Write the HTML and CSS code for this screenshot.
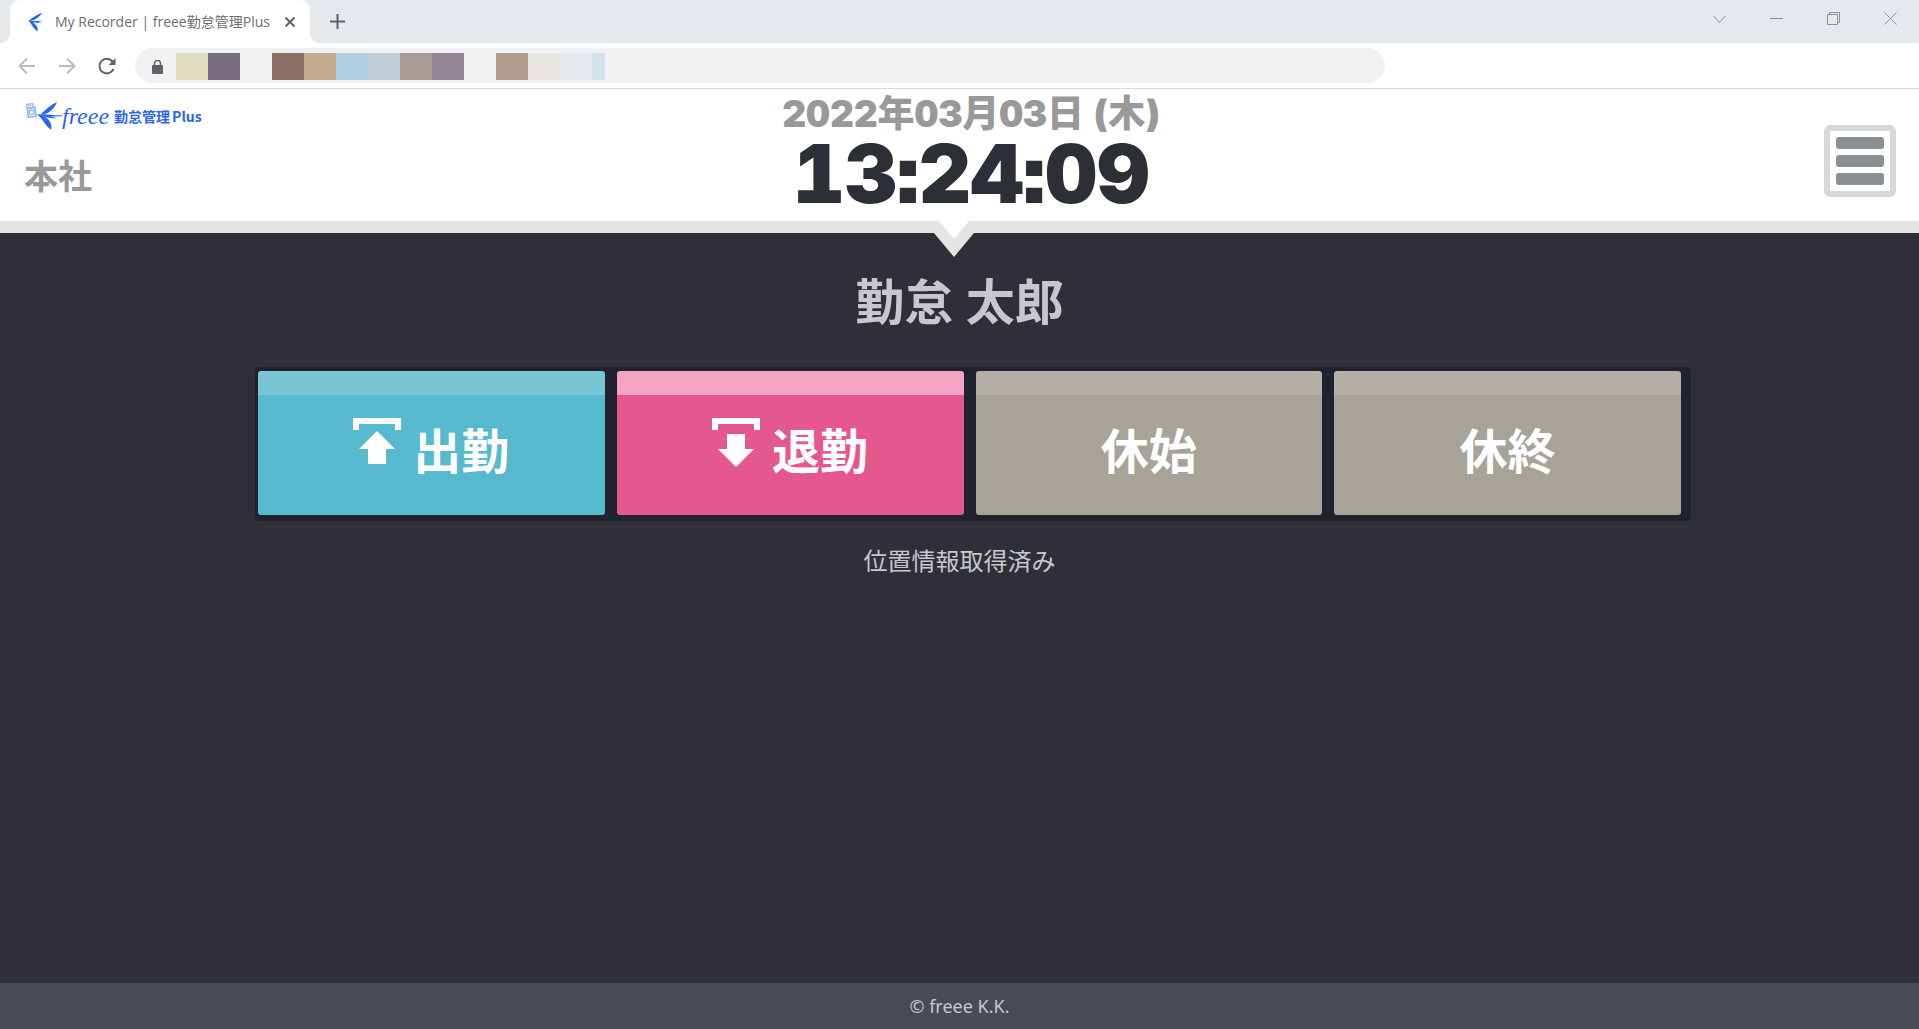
FILE: index.html
```html
<!DOCTYPE html>
<html lang="ja">
<head>
    <meta charset="UTF-8">
    <title>My Recorder | freee勤怠管理Plus</title>
    <link rel="stylesheet" href="styles.css">
</head>
<body>
    <!--ブラウザ枠-->
    <div class="browser">
        <div class="tab-bar">
            <div class="tab">
                <svg class="tab-icon" width="16" height="20" viewBox="84 34 48 60" fill="#2864f0">
                    <path d="M126 36C112 41 97 50 85 61C94 61 101 60 105 56C115 50 122 44 126 36Z"/>
                    <path d="M85 61C96 69 98 83 113 92C114 82 111 74 104 69L99 65L128 68L114 64L129 60L98 61Z"/>
                </svg>
                <span class="tab-title">My Recorder | freee勤怠管理Plus</span>
                <button class="tab-close" type="button" aria-label="タブを閉じる">
                    <svg width="10" height="10" viewBox="0 0 10 10" fill="none" stroke="#5f6368" stroke-width="2"><path d="M0.5 0.5L9.5 9.5M9.5 0.5L0.5 9.5"/></svg>
                </button>
            </div>
            <button class="tab-add" type="button" aria-label="新しいタブ">
                <svg width="15" height="15" viewBox="0 0 15 15" fill="none" stroke="#5f6368" stroke-width="2"><path d="M7.5 0V15M0 7.5H15"/></svg>
            </button>
            <div class="window-buttons">
                <button type="button" aria-label="タブを検索"><svg width="14" height="14" viewBox="0 0 14 14"><path d="M0.5 4L6.5 10.5L12.5 4"/></svg></button>
                <button type="button" aria-label="最小化"><svg width="14" height="14" viewBox="0 0 14 14"><path d="M0 6.5H13"/></svg></button>
                <button type="button" aria-label="元に戻す"><svg width="14" height="14" viewBox="0 0 14 14"><path d="M0.5 2.5H10.5V12.5H0.5ZM2.5 2V0.5H12.5V10.5H11"/></svg></button>
                <button type="button" aria-label="閉じる"><svg width="14" height="14" viewBox="0 0 14 14"><path d="M0.5 0.5L12.5 12.5M12.5 0.5L0.5 12.5"/></svg></button>
            </div>
        </div>
        <div class="tool-bar">
            <button class="nav off" type="button" aria-label="戻る"><svg width="18" height="18" viewBox="0 0 18 18"><path d="M17 9H2M9 1.5L1.5 9L9 16.5"/></svg></button>
            <button class="nav off" type="button" aria-label="進む"><svg width="18" height="18" viewBox="0 0 18 18"><path d="M1 9H16M9 1.5L16.5 9L9 16.5"/></svg></button>
            <button class="nav" type="button" aria-label="再読み込み"><svg width="18" height="18" viewBox="0 0 18 18"><path d="M15.5 12A7.3 7.3 0 1 1 14.5 4.5"/><path class="solid" d="M17.5 1V8H10.5Z"/></svg></button>
            <div class="address">
                <svg class="lock" width="11" height="14" viewBox="0 0 11 14"><rect y="5" width="11" height="9" rx="1" fill="#5f6368"/><path d="M2.5 6V3.5A3 3 0 0 1 8.5 3.5V6" fill="none" stroke="#5f6368" stroke-width="1.5"/></svg>
                <div class="mosaic">
                    <i class="c1"></i><i class="c2"></i><i></i><i class="c3"></i><i class="c4"></i><i class="c5"></i><i class="c6"></i><i class="c7"></i><i class="c8"></i><i></i><i class="c9"></i><i class="c10"></i><i class="c11"></i><i class="c12"></i>
                </div>
                <input type="text" aria-label="アドレス">
            </div>
        </div>
    </div>
    <!--ヘッダー-->
    <header class="header">
        <div class="company">
            <a class="logo" href="#">
                <svg width="38" height="31" viewBox="72 48 114 93">
                    <g fill="none" stroke="#8db5fb" stroke-width="5">
                        <path d="M82 73L105 70L108 97L85 100Z"/>
                        <path d="M82 73L80 61L98 59L100 71M88 60V66L93 65" stroke-width="4"/>
                        <circle cx="95" cy="85" r="7" stroke-width="4"/>
                    </g>
                    <g fill="#2864f0">
                        <path d="M171 54C154 62 136 76 123 91C133 91 142 89 148 84C159 76 167 66 171 54Z"/>
                        <path d="M112 92C130 104 132 123 154 137C156 122 150 108 136 100L130 97L112 92Z"/>
                        <path d="M110 92C130 88 145 93 186 94L186 97C172 96 162 97 152 98L174 103C154 103 130 99 110 92Z"/>
                    </g>
                </svg>
                <span class="logo-script">freee</span>
                <span class="logo-name">勤怠管理</span>
                <span class="logo-name">Plus</span>
            </a>
            <p class="office">本社</p>
        </div>
        <div class="now">
            <p class="date">2022年03月03日 (木)</p>
            <p class="clock">13:24:09</p>
        </div>
        <button class="menu" type="button" aria-label="メニュー"><span></span><span></span><span></span></button>
        <svg class="pointer" width="40" height="36" viewBox="0 0 40 36"><path d="M0 12H40L20 36Z" fill="#e4e4e4"/><path d="M5 0H35L20 18Z" fill="#fff"/></svg>
    </header>
    <!--打刻-->
    <main class="main">
        <h1 class="name">勤怠 太郎</h1>
        <div class="punch">
            <button class="in" type="button">
                <svg width="48" height="50" viewBox="0 0 48 50" fill="#fff"><path d="M0 0H48V12H42V6H6V12H0Z"/><path d="M24 13L42 31H33V46H15V31H6Z"/></svg>出勤
            </button>
            <button class="out" type="button">
                <svg width="48" height="50" viewBox="0 0 48 50" fill="#fff"><path d="M0 0H48V12H42V6H6V12H0Z"/><path d="M15 16H33V31H42L24 49L6 31H15Z"/></svg>退勤
            </button>
            <button type="button">休始</button>
            <button type="button">休終</button>
        </div>
        <p class="status">位置情報取得済み</p>
    </main>
    <footer class="footer">© freee K.K.</footer>
</body>
</html>
```

FILE: styles.css
```css
*{
    box-sizing: border-box;
}
body{
    display: flex;
    flex-direction: column;
    min-height: 100vh;
    margin: 0;
    background-color: #2f2f38;
    font-family: "Noto Sans", "Noto Sans CJK JP", sans-serif;
}
p,h1{
    margin: 0;
}
button{
    display: flex;
    align-items: center;
    justify-content: center;
    padding: 0;
    border: 0;
    background: none;
    font-family: inherit;
    cursor: pointer;
}
/**ブラウザ枠**/
.browser{
    border-bottom: 1px solid #d9dadc;
    background-color: #fff;
}
.tab-bar{
    display: flex;
    height: 43px;
    padding-left: 10px;
    background-color: #e5e9ec;
}
.tab{
    position: relative;
    display: flex;
    align-items: center;
    width: 300px;
    padding: 0 15px 0 18px;
    border-radius: 10px 10px 0 0;
    background-color: #fff;
}
/**タブ下の丸み**/
.tab:before,.tab:after{
    content: '';
    position: absolute;
    bottom: 0;
    width: 10px;
    height: 10px;
}
.tab:before{
    left: -10px;
    background: radial-gradient(circle at 0 0, transparent 10px, #fff 10px);
}
.tab:after{
    right: -10px;
    background: radial-gradient(circle at 100% 0, transparent 10px, #fff 10px);
}
.tab-title{
    flex: 1;
    margin-left: 11px;
    font-family: "Open Sans", "Noto Sans CJK JP", sans-serif;
    font-size: 14px;
    line-height: 20px;
    color: #6a6d71;
    white-space: nowrap;
}
.tab-add{
    width: 54px;
}
.window-buttons{
    display: flex;
    height: 38px;
    margin-left: auto;
}
.window-buttons button{
    width: 57px;
}
.window-buttons svg{
    fill: none;
    stroke: #8c8f92;
}
.tool-bar{
    display: flex;
    align-items: center;
    height: 45px;
    padding: 0 534px 0 7px;
}
.nav{
    width: 40px;
    height: 36px;
}
.nav svg{
    fill: none;
    stroke: #5f6368;
    stroke-width: 2;
}
.nav .solid{
    fill: #5f6368;
    stroke: none;
}
.nav.off svg{
    stroke: #b9bbbe;
}
.address{
    display: flex;
    flex: 1;
    align-items: center;
    height: 35px;
    margin-left: 8px;
    padding: 2px 17px 0;
    border-radius: 18px;
    background-color: #f0f1f3;
}
.mosaic{
    display: flex;
    margin-left: 13px;
}
.mosaic i{
    width: 32px;
    height: 27px;
}
.mosaic .c1{ background-color: #e1dcc0; }
.mosaic .c2{ background-color: #7a6c80; }
.mosaic .c3{ background-color: #8b6f67; }
.mosaic .c4{ background-color: #c5ac91; }
.mosaic .c5{ background-color: #b1cfe3; }
.mosaic .c6{ background-color: #c2cfda; }
.mosaic .c7{ background-color: #a99a95; }
.mosaic .c8{ background-color: #958894; }
.mosaic .c9{ background-color: #b29c8d; }
.mosaic .c10{ background-color: #eae6e2; }
.mosaic .c11{ background-color: #e4eaee; }
.mosaic .c12{ width: 13px; background-color: #d1e2e8; }
.address input{
    flex: 1;
    min-width: 0;
    border: 0;
    outline: 0;
    background: none;
}
/**ヘッダー**/
.header{
    position: relative;
    display: grid;
    grid-template-columns: 1fr auto 1fr;
    padding: 0 23px 12px 24px;
    border-bottom: 12px solid #e4e4e4;
    background-color: #fff;
}
.logo{
    display: flex;
    align-items: center;
    height: 31px;
    margin-top: 12px;
    padding-bottom: 2px;
    color: #2864f0;
    text-decoration: none;
}
.logo-script{
    margin-right: 5px;
    font-family: "Liberation Serif", serif;
    font-size: 24px;
    font-style: italic;
    line-height: 24px;
}
.logo-name{
    margin-right: 2px;
    font-family: "Noto Sans CJK JP", sans-serif;
    font-size: 14px;
    font-weight: bold;
    line-height: 20px;
}
.office{
    margin-top: 20px;
    font-size: 34px;
    font-weight: bold;
    line-height: 48px;
    color: #999;
}
/**日付と時計、コロンは四角いもの**/
.now{
    padding-left: 22px;
    font-family: Inter, "Noto Sans CJK JP", sans-serif;
    font-weight: 900;
    font-feature-settings: "tnum", "ss07", "calt" 0;
    text-align: center;
}
.date{
    font-size: 37px;
    line-height: 50px;
    color: #999;
}
.clock{
    font-size: 81px;
    line-height: 70px;
    color: #2d2f38;
}
.menu{
    flex-direction: column;
    gap: 6px;
    justify-self: end;
    width: 72px;
    height: 72px;
    margin-top: 36px;
    border: 6px solid #d8d8da;
    border-radius: 6px;
}
.menu span{
    width: 48px;
    height: 12px;
    border-radius: 3px;
    background-color: #8b9094;
}
.pointer{
    position: absolute;
    bottom: -36px;
    left: 50%;
    margin-left: -26px;
}
/**打刻**/
.main{
    flex: 1;
    text-align: center;
    color: #c8c8cb;
}
.name{
    margin-top: 32px;
    font-size: 49px;
    line-height: 72px;
}
.punch{
    display: grid;
    grid-template-columns: repeat(4, 1fr);
    gap: 12px;
    margin: 30px 228px 0 255px;
    padding: 4px 10px 6px 3px;
    border-radius: 4px;
    background-color: #20222d;
}
.punch button{
    gap: 12px;
    height: 144px;
    padding-bottom: 8px;
    border-top: 24px solid #b4afa4;
    border-radius: 3px;
    background-color: #a8a398;
    font-size: 48px;
    font-weight: bold;
    line-height: 96px;
    color: #fff;
}
.punch svg{
    margin-bottom: 16px;
}
.punch .in{
    border-color: #78c5d6;
    background-color: #57b9ce;
}
.punch .out{
    border-color: #f4a4c1;
    background-color: #e4588c;
}
.status{
    margin-top: 22px;
    font-size: 24px;
    line-height: 36px;
}
.footer{
    font-size: 18px;
    line-height: 46px;
    text-align: center;
    color: #c8c8cb;
    background-color: #474b53;
}
```
